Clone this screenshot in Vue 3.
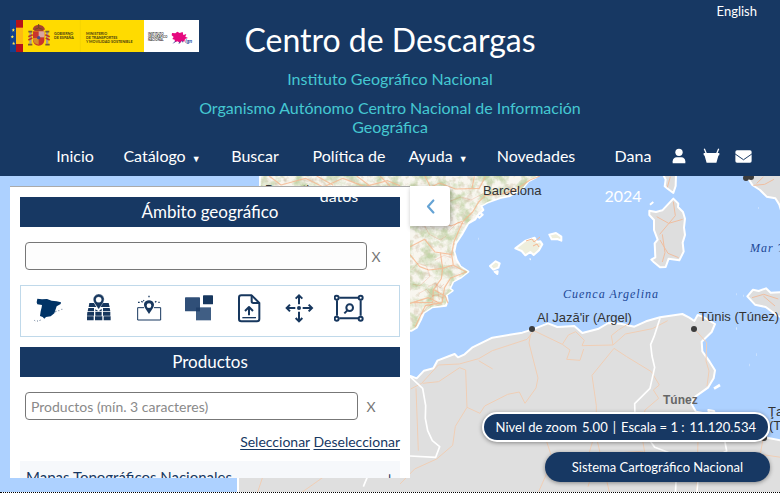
<script setup>
import { ref } from 'vue'

const place = ref('')
const product = ref('')
const open = ref(true)

const menu = [
  { label: 'Inicio' },
  { label: 'Catálogo', sub: true },
  { label: 'Buscar' },
  { label: 'Política de datos' },
  { label: 'Ayuda', sub: true },
  { label: 'Novedades' },
  { label: 'Dana 2024' }
]
</script>

<template>
  <div class="page">
    <header class="header">
      <div class="brand">
        <a class="logo" href="#" aria-label="IGN">
          <svg viewBox="30 60 567 96" width="189" height="32">
            <rect x="30" y="60" width="567" height="96" fill="#ffdb00" />
            <rect x="30" y="60" width="18" height="96" fill="#12418f" />
            <rect x="48" y="60" width="21" height="96" fill="#b5121b" />
            <rect x="48" y="83" width="21" height="49" fill="#fdb913" />
            <g fill="#ffe14a">
              <path d="M40 84l1 4 4 1-3 2 1 4-3-2-3 2 1-4-3-2 4-1z" />
              <path d="M37 104l1 4 4 1-3 2 1 4-3-2-3 2 1-4-3-2 4-1z" />
              <path d="M41 124l1 4 4 1-3 2 1 4-3-2-3 2 1-4-3-2 4-1z" />
            </g>
            <g>
              <path d="M98 88q3-13 18-14q15 1 19 14l-6 5h-25z" fill="#a8442f" />
              <path d="M104 88q12-8 24 0M116 72v12" stroke="#6d4a22" stroke-width="3" fill="none" />
              <path d="M99 94h34v28q-2 13-17 15q-15-2-17-15z" fill="#c9352c" />
              <path d="M116 94h17v18h-17z" fill="#d8a5a0" />
              <path d="M99 114h17v20q-14-2-17-14z" fill="#d68a28" />
              <circle cx="116" cy="113" r="5" fill="#4b4a8c" />
              <path d="M88 96h7v35h-7zM138 96h7v35h-7z" fill="#a99c8e" />
              <path d="M85 95h12M136 95h12M84 134h13M136 134h13" stroke="#795a3a" stroke-width="5" />
              <path d="M85 110l13-6M85 120l12-6M136 104l13 6M137 114l12 6" stroke="#bd3528" stroke-width="5" />
            </g>
            <path d="M241 60v96" stroke="#f0d000" stroke-width="2" />
            <g class="logo-text" fill="#443a10">
              <text x="162" y="105">GOBIERNO</text>
              <text x="162" y="117">DE ESPAÑA</text>
              <text x="258" y="105">MINISTERIO</text>
              <text x="258" y="117">DE TRANSPORTES</text>
              <text x="258" y="129">Y MOVILIDAD SOSTENIBLE</text>
            </g>
            <rect x="432" y="60" width="165" height="96" fill="#fff" />
            <g class="logo-small" fill="#333">
              <text x="444" y="104">INSTITUTO</text>
              <text x="444" y="114">GEOGRÁFICO</text>
              <text x="444" y="124">NACIONAL</text>
            </g>
            <path d="M516 99l10 1 6-5 7 4 9-3 2 9 9-3-3 8 8 4-9 3-2 8-8-2-5 7-7-6-8 3-1-8-7-2 4-6-6-5z" fill="#e5097f" />
            <path d="M520 130l7-7M537 131l3-6M548 127l-2-5" stroke="#4b4aa0" stroke-width="3" />
            <text x="556" y="130" class="ign" fill="#2b4d9b">ign</text>
          </svg>
        </a>
        <div class="titles">
          <h1>Centro de Descargas</h1>
          <p>Instituto Geográfico Nacional</p>
          <p>Organismo Autónomo Centro Nacional de Información Geográfica</p>
        </div>
        <a class="lang" href="#">English</a>
      </div>
      <nav class="nav">
        <div v-for="m in menu" :key="m.label" class="item">
          <a href="#">{{ m.label }}<span v-if="m.sub" class="caret">▼</span></a>
        </div>
        <a class="tool" href="#" aria-label="Usuario">
          <svg viewBox="0 0 48 48" width="16" height="16"><circle cx="24" cy="13" r="11" /><path d="M5 46V40Q6 29 17 28H31Q42 29 43 40V46z" /></svg>
        </a>
        <a class="tool" href="#" aria-label="Cesta">
          <svg viewBox="0 0 52 48" width="17" height="16"><path d="M2 15h48v6l-3 2-6 22H11L5 23l-3-2z" /><path d="M4 2l6 14M48 2l-6 14" stroke="#fff" stroke-width="4" /></svg>
        </a>
        <a class="tool" href="#" aria-label="Correo">
          <svg viewBox="0 0 52 40" width="17" height="13"><rect x="1" y="1" width="50" height="38" rx="5" /><path d="M0 12l26 18 26-18" stroke="#173863" stroke-width="3" fill="none" /></svg>
        </a>
      </nav>
    </header>

    <main class="viewer">
      <svg class="map" viewBox="0 176 780 317" preserveAspectRatio="xMinYMin slice" aria-hidden="true">
        <defs>
          <filter id="relief" x="0" y="0" width="1" height="1" color-interpolation-filters="sRGB">
            <feTurbulence type="fractalNoise" baseFrequency=".028" numOctaves="4" seed="7" />
            <feColorMatrix values="0 0 0 0 .66  0 0 0 0 .76  0 0 0 0 .52  3.4 0 0 0 -1.5" result="green" />
            <feTurbulence type="fractalNoise" baseFrequency=".05" numOctaves="3" seed="21" />
            <feColorMatrix values="0 0 0 0 .8  0 0 0 0 .74  0 0 0 0 .64  0 3 0 0 -1.5" result="brown" />
            <feMerge result="tones"><feMergeNode in="brown" /><feMergeNode in="green" /></feMerge>
            <feComposite in="tones" in2="SourceAlpha" operator="in" />
          </filter>
        </defs>
        <rect x="0" y="176" width="780" height="317" fill="#add1ff" />
        <g transform="translate(400 170) scale(.33333)" stroke-linejoin="round">
          <path d="M-420 0H428L408 22 385 34 366 58 330 78 300 84 262 98 244 108 250 120 234 135 226 148 205 160 188 190 168 220 163 245 170 269 182 290 205 305 184 322 160 335 150 356 158 362 140 375 143 392 138 407 96 412 72 428 64 446 50 473 35 482-420 482z" fill="#f8f6ef" stroke="#fff" stroke-width="6" />
          <path d="M-418 0H425L405 22 385 32 366 56 330 76 300 82 262 96 242 108 232 133 205 156 188 186 166 220 161 245 168 269 180 290 203 305 184 320 158 335 148 356 156 362 138 375 141 392 136 405 96 410 70 428 62 446 48 471 35 480-418 480z" filter="url(#relief)" opacity=".65" />
          <g fill="none" stroke="#f6b78f" stroke-width="3.5" opacity=".8">
            <path d="M420 18L390 30 350 58 302 73 256 76 236 96 218 126 189 154 162 215 155 253 160 286 199 306 152 324 134 352 126 398 76 407 45 471" />
            <path d="M30 65L92 52 118 39 167 57 238 55 256 20M92 52l-18-35M216 55l7-36M30 120l50 5 41-28M186 154l-33 14-57-26-66 16M157 254l-52-8-31-38-44 22M121 247l7 48-42 5-27-10-29-36M128 295l31-10M128 295l-4 31-24 34-2 37-60 1M98 357l38 22 8 21M30 400l55-17 40 20" />
            <path d="M-410 5l53 40 73-20 54 26 59-26 65 25 69-18 37 15M-250 18l50 28M-130 18l40 30M-60 18l30 30" />
          </g>
          <g fill="none" stroke="#e36c42" stroke-width="1.5" opacity=".4">
            <path d="M35 95l31-12 24 15 27-14 30 11 35-14 31 9 38-20M40 155l32 10 15 27 34 18 18-12M35 300l18-20 26 8 11 31-30 28-21-4M57 370l22-12 19 20 25-5M65 432l18-22 28-16M150 180l23-23 22 5M105 270l28-14 21 8M85 350l20-10 15 14 12-12M90 385l16-12 22 10M110 340l8 50" />
          </g>
        </g>
        <g transform="translate(400 170) scale(.33333)" stroke="#fff" stroke-width="6" stroke-linejoin="round">
          <path d="M346 235L375 213 404 203 411 216 421 214 427 223 417 241 401 255 391 246 376 256 365 243zM448 194L468 189 484 200 484 212 472 207 455 208zM270 288l17-14 12 6-4 13-15 6zM284 305l9-1-1 8zM389 268l3-1" fill="#eeeedd" />
          <path d="M790 15L797 29 794 49 803 56 820 69 827 48 828 15zM748 122L768 126 787 121 820 86 835 101 834 111 849 126 855 146 852 173 855 195 848 218 851 245 838 271 806 266 797 291 780 292 762 277 754 269 766 262 764 220 773 209 762 180 762 150 748 135zM1038 15L1057 45 1080 60 1100 80 1126 85 1138 104 1150 144V15zM1042 379l17-20 17 4 22-8 14 13 38-2v78l-18-7-35-26-32-7z" fill="#dedede" />
          <path d="M750 104l10-8M238 128l10 6-10 9-8-6M235 206h1M1074 114h1M1009 373h1M1030 377h1M1008 476h1" fill="none" />
        </g>
        <path d="M526 241l6-2 2 3 6-5M533 246l4-2 2 3" fill="none" stroke="#f6b78f" />
        <g transform="translate(400 170) scale(.33333)" fill="none" stroke="#efbea0" stroke-width="3">
          <path d="M811 20l-9 32M820 95l6 42-47 56M770 140l36 20 42-12M787 193l8 55-8 28M780 210l24 40 32 13M1060 46l34-3 28-15M1070 40l20-19M1056 383l35-10 44 14M1090 378l35 30" />
        </g>
        <g transform="translate(400 320) scale(.33333)" stroke-linejoin="round">
          <path d="M-486 530L-486 458-464 402-420 370-310 345-230 350-170 310-80 215 0 190 31 168 50 175 72 152 100 145 112 122 148 108 164 102 174 112 194 103 216 83 277 53 367 38 396 29 444 10 472 21 523 18 547 39 596 26 625 9 662 11 703 20 738 4 780-8 847-18 868-7 883 3 893-15 908-10 945 12 935 36 905 65 907 94 929 125 945 151 941 175 924 203 887 229 873 249 888 275 928 283 925 270 942 273 952 298 1030 330 1084 350 1150 363V530z" fill="#dfdfdf" stroke="#fff" stroke-width="6" />
          <path d="M942 206l18-11M1048 135h1M1068 104h1M1008 25h1" stroke="#fff" stroke-width="8" />
          <g fill="none" stroke="#f0ceb5" stroke-width="3">
            <path d="M-430 525l20-60 70-55 75 54 78-29 98 6 30-42M-200 450l-110 78M32 207L65 190 115 135 178 132 236 116 277 92 381 58 402 32 487 73 505 45 527 35 553 61 546 77 639 75 676 42 757 26 803 2M68 190l48-5 63-42 18 7 4 112 39 18 14-22 69-35 35-7 17 34 33-46 6-30-27-105 5-27M236 122l42 25M487 73l23 17-10 28 40 3 11-34M639 75L634 47 655 30 687 10M642 85l-66 81 13 91v70l-24 80 18 31-19 62M642 85l38 25 74 45 24 40-18 15 16 25-41 35-12 62 18 105M201 262l-35 57-8 57-48 41-66 30-44 45M440 365l18 55-42 95M590 355l39 165M1090 350l-9 53 69 10M894 355l-4 165M889 33l31 35-2 55 9 30-6 45M48 205l7 187M600 402l125-8 60 28" />
          </g>
          <path d="M780-5L762 50 752 74 756 108 764 142 750 205 704 251 705 285 720 320 764 382 832 407 826 525M30 170L68 205 77 257 76 295 83 332 97 362 119 380 107 412 30 408M-110 500l20-48-15-22 18-15M973 355l7 38-82 43-8 88" fill="none" stroke="#fff" stroke-width="5" />
        </g>
        <g fill="#3c3c3c">
          <circle cx="532" cy="329" r="3" /><circle cx="694" cy="329" r="3" /><circle cx="764" cy="438" r="3" /><circle cx="746" cy="178" r="3" /><circle cx="751" cy="177" r="3" />
        </g>
        <g class="city">
          <text x="265" y="194">Donostia</text>
          <text x="483" y="195">Barcelona</text>
          <text x="537" y="322">Al Jazā'ir (Argel)</text>
          <text x="699" y="321">Tūnis (Túnez)</text>
          <text x="768" y="416">Ţarābulus</text>
          <text x="769" y="430">(Trípoli)</text>
        </g>
        <text class="country" x="663" y="404">Túnez</text>
        <g class="sea">
          <text x="563" y="298">Cuenca Argelina</text>
          <text x="750" y="252">Mar Tirreno</text>
        </g>
      </svg>

      <section v-show="open" class="panel">
        <h2>Ámbito geográfico</h2>
        <div class="search">
          <input v-model="place" class="wide" type="text" aria-label="Ámbito geográfico">
          <button class="clear" type="button" @click="place = ''">X</button>
        </div>
        <div class="tools">
          <button type="button" aria-label="España">
            <svg viewBox="102 50 90 90"><path d="M112 67l14 2 15-1 14 5 15 2 13 3-1 5-12 7-4 12-3 9-11 9-14 2-5 5-5-5-8-3 2-14 3-12 1-7-14-2-2-6z" fill="#003366" /><path d="M165 107l6-3M175 103h5M184 99h3M103 132l3 2M111 134h4M119 134l3-5" stroke="#17375e" stroke-width="3" stroke-dasharray="3 2" opacity=".65" /></svg>
          </button>
          <button type="button" aria-label="Hojas">
            <svg viewBox="252 50 90 90"><path d="M268 80h14l7 12h-23zM308 80h18l3 12h-28zM265 95h17v10h-19zM286 99l10 6 9-8v8h-19zM309 95h20l2 10h-22zM262 107h20v11h-21zM286 107h19v11h-19zM309 107h22v11h-22zM261 120h20v12h-20zM285 120h22v12h-22zM311 120h21v12h-21z" /><path fill-rule="evenodd" d="M296 99l-13-19q-8-14 3-23 10-8 21 0 10 9 2 23zM296 62a8 8 0 1 0 0 16 8 8 0 1 0 0-16z" stroke="#fff" stroke-width="1" /></svg>
          </button>
          <button type="button" aria-label="Ubicación">
            <svg viewBox="402 50 90 90"><path d="M432 94h-19v37h69V94h-20" fill="none" stroke="#17375e" stroke-width="3" /><path fill-rule="evenodd" d="M447 113l-12-18q-7-13 2-20 10-7 20 0 9 8 2 20zM447 81a7 7 0 1 0 0 14 7 7 0 1 0 0-14z" /><path d="M447 58v5M414 78h5M424 75l4 3M475 78h4M469 75l-4 3M430 72l2 2" stroke="#17375e" stroke-width="4" /></svg>
          </button>
          <button type="button" aria-label="Capas">
            <svg viewBox="552 50 90 90"><rect x="555" y="63" width="45" height="42" rx="2" fill="#304f78" /><rect x="609" y="57" width="30" height="27" rx="2" /><rect x="588" y="93" width="45" height="39" fill="#405e84" /><path d="M588 93h12v12h-12z" fill="#203f69" /></svg>
          </button>
          <button type="button" aria-label="Subir archivo">
            <svg viewBox="702 50 90 90"><g fill="none" stroke="#17375e" stroke-width="6" stroke-linejoin="round"><path d="M755 57h-31q-7 0-7 7v64q0 7 7 7h47q7 0 7-7V80z" /><path d="M755 57v18q0 5 5 5h18" /><path d="M747 117V94M735 104l12-12 12 12" /><path d="M727 124h41" stroke-width="4" /></g></svg>
          </button>
          <button type="button" aria-label="Mover">
            <svg viewBox="852 52 90 90"><g fill="none" stroke="#17375e" stroke-width="6"><path d="M897 86V61M887 69l10-10 10 10M897 108v25M887 127l10 10 10-10M886 97h-24M870 87l-10 10 10 10M908 97h26M926 87l10 10-10 10" /></g><circle cx="897" cy="97" r="6" /></svg>
          </button>
          <button type="button" aria-label="Buscar en la zona">
            <svg viewBox="1002 52 90 90"><g fill="none" stroke="#17375e" stroke-width="6"><path d="M1018 66h56M1018 128h56M1011 74v46M1082 74v46" /><g fill="#fff"><circle cx="1010" cy="66" r="6" /><circle cx="1082" cy="66" r="6" /><circle cx="1010" cy="129" r="6" /><circle cx="1082" cy="129" r="6" /></g><circle cx="1049" cy="96" r="10" /><path d="M1042 104l-9 9" /></g></svg>
          </button>
        </div>
        <h2>Productos</h2>
        <div class="search">
          <input v-model="product" type="text" placeholder="Productos (mín. 3 caracteres)" aria-label="Productos">
          <button class="clear far" type="button" @click="product = ''">X</button>
        </div>
        <div class="links"><a href="#">Seleccionar</a> <a href="#">Deseleccionar</a></div>
        <button class="group" type="button"><span>Mapas Topográficos Nacionales</span><span>+</span></button>
      </section>
      <button class="toggle" type="button" aria-label="Panel" @click="open = !open">
        <svg viewBox="0 0 24 42" width="9" height="15"><path d="M20 4L5 21l15 17" fill="none" stroke="#65a3d4" stroke-width="6" stroke-linecap="round" stroke-linejoin="round" /></svg>
      </button>
      <div class="status">
        <div class="pill zoom"><span>Nivel de zoom</span><span>5.00</span><span>|</span><span>Escala = 1 :</span><span>11.120.534</span></div>
        <a class="pill source" href="#">Sistema Cartográfico Nacional</a>
      </div>
    </main>
  </div>
</template>

<style>
body { margin: 0; }
</style>

<style scoped>
* { box-sizing: border-box; }
.page { display: flex; flex-direction: column; height: 100vh; overflow: hidden; font-family: Lato, "Liberation Sans", sans-serif; color: #fff; }
a { color: inherit; text-decoration: none; }
button { font-family: inherit; margin: 0; padding: 0; border: 0; background: none; cursor: pointer; }
.header { background: #173863; position: relative; z-index: 2; }
.brand { display: grid; grid-template-columns: minmax(0, 1fr) minmax(0, 390px) minmax(0, 1fr); padding: 0 10px; }
.logo { padding-top: 20px; }
.logo svg { display: block; }
.logo-text { font: 700 11px Lato, sans-serif; }
.logo-small { font: 700 9px Lato, sans-serif; }
.ign { font: italic 700 16px Lato, sans-serif; }
.titles { text-align: center; padding-top: 20px; }
h1 { margin: 0; font-size: 32px; line-height: 39px; font-weight: 400; }
.titles p { margin: 10px 0 0; color: #45c8d2; font-size: 16px; line-height: 19px; }
.lang { justify-self: end; padding: 3px 13px 0 0; font-size: 13px; line-height: 16px; }
.nav { display: grid; grid-template-columns: 60fr 114fr 72fr 106fr 82fr 114fr 70fr 32fr 32fr 32fr; grid-template-rows: 40px; padding: 0 21px 0 45px; font-size: 16px; line-height: 40px; }
.item { text-align: center; }
.item a { padding: 0 10px; }
.caret { font-size: 9px; margin-left: 6px; }
.tool { display: flex; align-items: center; justify-content: center; fill: #fff; }
.viewer { position: relative; flex: 1; min-height: 0; display: flex; align-items: flex-start; padding: 10px 10px 14px; border-bottom: 1px dotted #000; }
.map { position: absolute; inset: 0; width: 100%; height: 100%; }
.city { font: 13px "Liberation Sans", sans-serif; fill: #333; }
.country { font: 700 12px "Liberation Sans", sans-serif; fill: #666; }
.sea { font: italic 12px "Liberation Serif", serif; letter-spacing: 1px; fill: #1c4796; }
.panel { position: relative; width: 400px; height: 100%; overflow: hidden; padding: 10px; background: #fff; border-top: 1px solid #aaa; color: #173863; }
h2 { margin: 0; height: 30px; background: #173863; color: #fff; text-align: center; font-size: 17px; line-height: 30px; font-weight: 400; }
.search { display: flex; padding: 15px 5px; }
input { width: 333px; height: 28px; padding: 0 5px; border: 1px solid #777; border-radius: 4px; background: #fff; font: 14px Lato, sans-serif; color: #333; }
input::placeholder { color: #8a8a8a; }
.wide { width: 342px; background: #fdfdfd; }
.clear { width: 18px; font-size: 14px; color: #777; }
.far { margin-left: 4px; }
.tools { display: flex; height: 52px; margin-bottom: 10px; padding: 7px 3px; border: 1px solid #c0d9ea; }
.tools button { width: 50px; height: 30px; }
.tools svg { display: block; width: 30px; height: 30px; margin: 0 auto; fill: #17375e; }
.links { text-align: right; font-size: 14px; line-height: 14px; }
.links a { text-decoration: underline; text-underline-offset: 2px; }
.group { display: flex; justify-content: space-between; align-items: center; width: 100%; height: 32px; margin-top: 12px; padding: 0 6px; background: #f6f8fb; color: #173863; font-size: 15px; }
.toggle { position: relative; display: flex; align-items: center; justify-content: center; width: 40px; height: 40px; background: #fff; border-radius: 0 4px 4px 0; box-shadow: 1px 2px 5px rgba(0, 0, 0, .3); }
.status { position: relative; align-self: flex-end; margin: 0 0 -4px auto; display: flex; flex-direction: column; align-items: flex-end; gap: 10px; }
.pill { display: flex; align-items: center; justify-content: center; height: 30px; border-radius: 15px; background: #173863; color: #fff; font-size: 13px; white-space: nowrap; box-shadow: 0 1px 4px rgba(0, 0, 0, .4); }
.zoom { gap: 5px; padding: 0 12px; border: 2px solid #fff; }
.source { padding: 0 27px; }
</style>
